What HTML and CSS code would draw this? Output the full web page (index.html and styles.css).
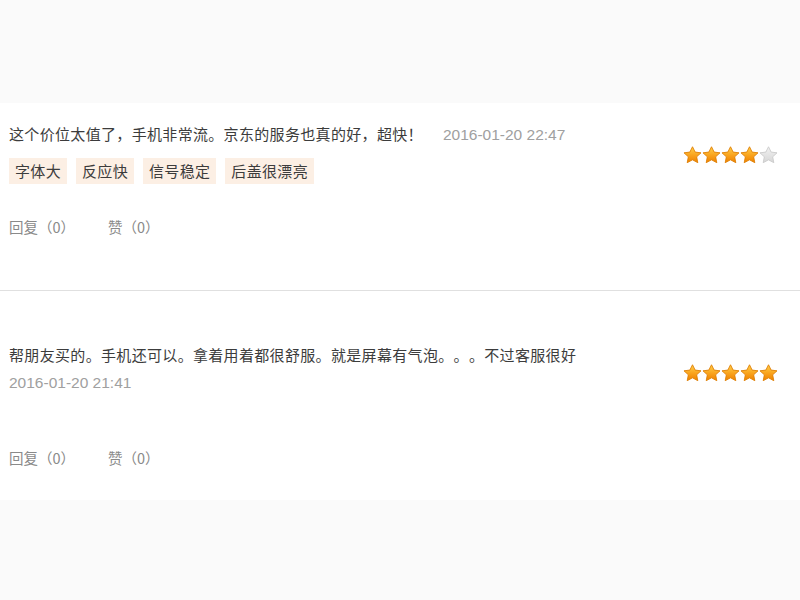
FILE: index.html
```html
<!DOCTYPE html>
<html lang="zh">
<head>
<meta charset="utf-8">
<title>评价</title>
<link rel="stylesheet" href="styles.css">
</head>
<body>
<svg width="0" height="0" class="defs">
  <defs>
    <linearGradient id="gold" x1="0" y1="0" x2="0" y2="1">
      <stop offset="0" stop-color="#ffd04a"/>
      <stop offset="0.55" stop-color="#f9a21c"/>
      <stop offset="1" stop-color="#ee8200"/>
    </linearGradient>
    <linearGradient id="grey" x1="0" y1="0" x2="0" y2="1">
      <stop offset="0" stop-color="#f2f2f2"/>
      <stop offset="1" stop-color="#d6d6d6"/>
    </linearGradient>
    <symbol id="star" viewBox="0 0 20 19">
      <path d="M10 0.8 L12.8 6.4 L19 7.2 L14.4 11.4 L15.6 17.6 L10 14.6 L4.4 17.6 L5.6 11.4 L1 7.2 L7.2 6.4 Z" stroke-linejoin="round"/>
    </symbol>
  </defs>
</svg>
<div class="top-gap"></div>
<main class="list">
  <section class="review first">
    <div class="body">
      <p class="text">这个价位太值了，手机非常流。京东的服务也真的好，超快！<span class="date inline">2016-01-20 22:47</span></p>
      <div class="tags">
        <span class="tag">字体大</span>
        <span class="tag">反应快</span>
        <span class="tag">信号稳定</span>
        <span class="tag">后盖很漂亮</span>
      </div>
      <div class="actions">
        <span class="act">回复（0）</span>
        <span class="act">赞（0）</span>
      </div>
    </div>
    <div class="stars s1">
      <svg class="star on"><use href="#star"/></svg><svg class="star on"><use href="#star"/></svg><svg class="star on"><use href="#star"/></svg><svg class="star on"><use href="#star"/></svg><svg class="star off"><use href="#star"/></svg>
    </div>
  </section>
  <section class="review second">
    <div class="body">
      <p class="text">帮朋友买的。手机还可以。拿着用着都很舒服。就是屏幕有气泡。。。不过客服很好</p>
      <p class="date">2016-01-20 21:41</p>
      <div class="actions">
        <span class="act">回复（0）</span>
        <span class="act">赞（0）</span>
      </div>
    </div>
    <div class="stars s2">
      <svg class="star on"><use href="#star"/></svg><svg class="star on"><use href="#star"/></svg><svg class="star on"><use href="#star"/></svg><svg class="star on"><use href="#star"/></svg><svg class="star on"><use href="#star"/></svg>
    </div>
  </section>
</main>
</body>
</html>
```

FILE: styles.css
```css
html, body {
  margin: 0;
  padding: 0;
  background: #fafafa;
  font-family: "Noto Sans CJK SC", "Liberation Sans", sans-serif;
  color: #3c3c3c;
  text-spacing-trim: space-all;
}
.defs {
  position: absolute;
  width: 0;
  height: 0;
}
.top-gap {
  height: 103px;
}
.list {
  background: #ffffff;
}
.review {
  display: flex;
  justify-content: space-between;
  padding: 0 22px 0 9px;
}
.review.first {
  padding-top: 19px;
  padding-bottom: 51px;
  border-bottom: 1px solid #e0e0e0;
}
.review.second {
  padding-top: 52px;
  padding-bottom: 30px;
}
.text {
  margin: 0;
  font-size: 15px;
  letter-spacing: 0.33px;
  line-height: 24px;
  color: #3c3c3c;
  white-space: nowrap;
}
.date {
  margin: 4px 0 0;
  font-family: "Liberation Sans", Arial, sans-serif;
  font-size: 15.5px;
  letter-spacing: 0;
  line-height: 24px;
  color: #a0a0a0;
}
.date.inline {
  margin: 0 0 0 20px;
}
.tags {
  display: flex;
  gap: 9px;
  margin-top: 11px;
}
.tag {
  background: #fcefe4;
  padding: 0 6px;
  font-size: 15px;
  letter-spacing: 0.33px;
  line-height: 26px;
  color: #3c3c3c;
}
.actions {
  display: flex;
  gap: 33px;
  margin-top: 31px;
  font-size: 14.5px;
  line-height: 24px;
  color: #8a8a8a;
}
.second .actions {
  margin-top: 51px;
}
.stars {
  display: flex;
  gap: 0;
}
.stars.s1 {
  margin-top: 24px;
}
.stars.s2 {
  margin-top: 21px;
}
.star {
  width: 19px;
  height: 18px;
}
.star.on {
  fill: url(#gold);
  stroke: #dd7d00;
  stroke-width: 0.9;
}
.star.off {
  fill: url(#grey);
  stroke: #c9c9c9;
  stroke-width: 0.9;
}
```
